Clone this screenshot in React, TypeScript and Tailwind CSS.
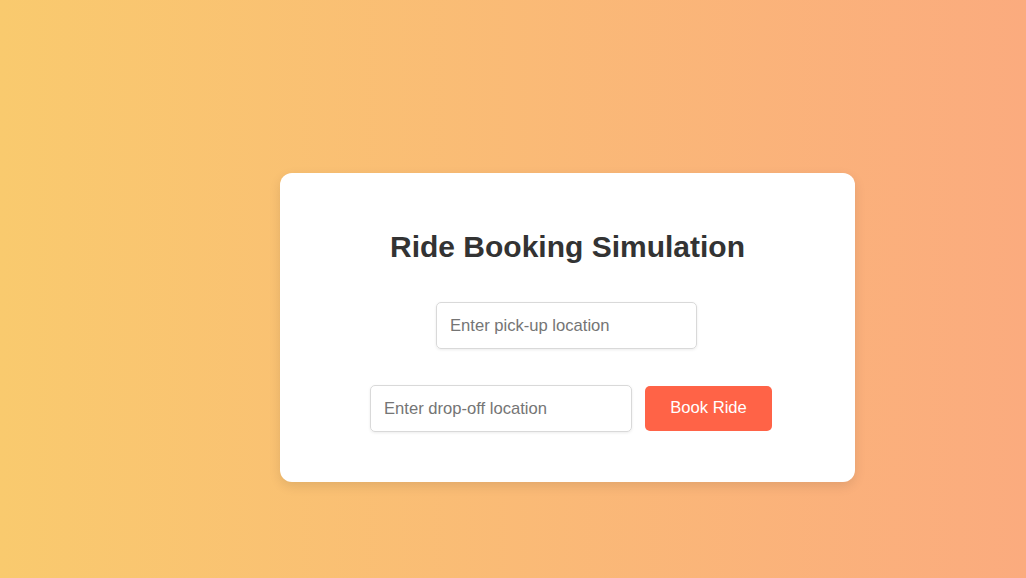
const App = () => {
  return (
    <div
      className="w-full h-[578px] bg-linear-to-r/srgb from-[#f9ca6e] to-[#fbab7e] pl-[280px] pt-[173px]"
      style={{ fontFamily: '"Liberation Sans", Arial, sans-serif' }}
    >
      <div className="w-[575px] bg-white rounded-xl shadow-[0_4px_12px_rgba(0,0,0,0.1)] pt-[57px] pb-[50px] flex flex-col items-center">
        <h2 className="text-[30px] leading-[33px] h-[32px] font-bold text-[#333] text-center">
          Ride Booking Simulation
        </h2>

        <div className="mt-[40px] flex justify-center w-full pr-[2px]">
          <input
            type="text"
            placeholder="Enter pick-up location"
            className="w-[261px] h-[47px] px-[13px] text-[16.6px] text-[#333] placeholder:text-[#757575] border border-[#d9d9d9] rounded-[5px] shadow-[0_1px_3px_rgba(0,0,0,0.08)] outline-none"
          />
        </div>

        <div className="mt-[36px] flex justify-center items-center gap-[13px] w-full pl-[7px]">
          <input
            type="text"
            placeholder="Enter drop-off location"
            className="w-[262px] h-[47px] px-[13px] text-[16.6px] text-[#333] placeholder:text-[#757575] border border-[#d9d9d9] rounded-[5px] shadow-[0_1px_3px_rgba(0,0,0,0.08)] outline-none"
          />
          <button className="w-[127px] h-[45px] bg-[#ff6347] text-white text-[16.6px] rounded-[5px]">
            Book Ride
          </button>
        </div>
      </div>
    </div>
  )
}

export default App
